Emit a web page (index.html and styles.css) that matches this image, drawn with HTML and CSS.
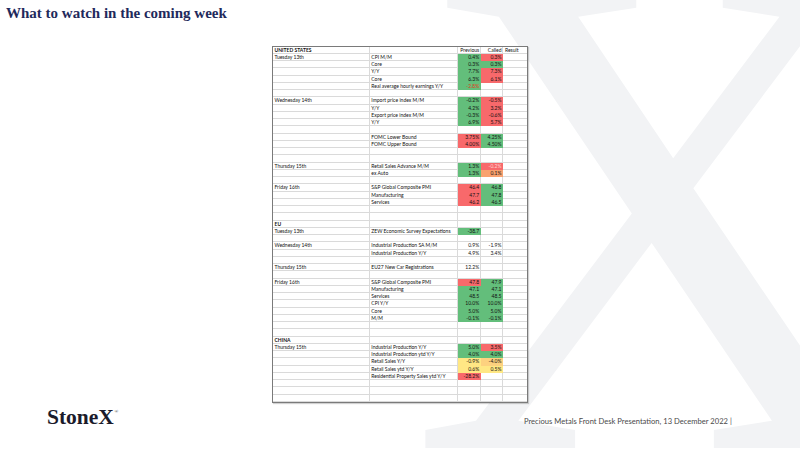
FILE: index.html
```html
<!DOCTYPE html>
<html lang="en">
<head>
<meta charset="utf-8">
<title>What to watch in the coming week</title>
<link rel="stylesheet" href="styles.css">
</head>
<body>
<div class="watermark" aria-hidden="true"></div>
<div class="slide">
  <header class="head"><h1 class="title">What to watch in the coming week</h1></header>
  <main class="content">
    <div class="sheet">
      <div class="row"><div class="c b">UNITED STATES</div><div class="c"></div><div class="c n">Previous</div><div class="c n">Called</div><div class="c e">Result</div></div>
      <div class="row"><div class="c">Tuesday 13th</div><div class="c">CPI M/M</div><div class="c n g">0.4%</div><div class="c n r">0.3%</div><div class="c e"></div></div>
      <div class="row"><div class="c"></div><div class="c">Core</div><div class="c n g">0.3%</div><div class="c n g">0.3%</div><div class="c e"></div></div>
      <div class="row"><div class="c"></div><div class="c">Y/Y</div><div class="c n g">7.7%</div><div class="c n r">7.3%</div><div class="c e"></div></div>
      <div class="row"><div class="c"></div><div class="c">Core</div><div class="c n g">6.3%</div><div class="c n r">6.1%</div><div class="c e"></div></div>
      <div class="row"><div class="c"></div><div class="c">Real average hourly earnings Y/Y</div><div class="c n g neg">-2.8%</div><div class="c n"></div><div class="c e"></div></div>
      <div class="row"><div class="c"></div><div class="c"></div><div class="c"></div><div class="c"></div><div class="c e"></div></div>
      <div class="row"><div class="c">Wednesday 14th</div><div class="c">Import price index M/M</div><div class="c n g">-0.2%</div><div class="c n r">-0.5%</div><div class="c e"></div></div>
      <div class="row"><div class="c"></div><div class="c">Y/Y</div><div class="c n g">4.2%</div><div class="c n r">3.2%</div><div class="c e"></div></div>
      <div class="row"><div class="c"></div><div class="c">Export price index M/M</div><div class="c n g">-0.3%</div><div class="c n r">-0.6%</div><div class="c e"></div></div>
      <div class="row"><div class="c"></div><div class="c">Y/Y</div><div class="c n g">6.9%</div><div class="c n r">5.7%</div><div class="c e"></div></div>
      <div class="row"><div class="c"></div><div class="c"></div><div class="c"></div><div class="c"></div><div class="c e"></div></div>
      <div class="row"><div class="c"></div><div class="c">FOMC Lower Bound</div><div class="c n r">3.75%</div><div class="c n g">4.25%</div><div class="c e"></div></div>
      <div class="row"><div class="c"></div><div class="c">FOMC Upper Bound</div><div class="c n r">4.00%</div><div class="c n g">4.50%</div><div class="c e"></div></div>
      <div class="row"><div class="c"></div><div class="c"></div><div class="c"></div><div class="c"></div><div class="c e"></div></div>
      <div class="row"><div class="c"></div><div class="c"></div><div class="c"></div><div class="c"></div><div class="c e"></div></div>
      <div class="row"><div class="c">Thursday 15th</div><div class="c">Retail Sales Advance M/M</div><div class="c n g">1.3%</div><div class="c n r pale">-0.2%</div><div class="c e"></div></div>
      <div class="row"><div class="c"></div><div class="c">ex Auto</div><div class="c n g">1.3%</div><div class="c n o">0.1%</div><div class="c e"></div></div>
      <div class="row"><div class="c"></div><div class="c"></div><div class="c"></div><div class="c"></div><div class="c e"></div></div>
      <div class="row"><div class="c">Friday 16th</div><div class="c">S&amp;P Global Composite PMI</div><div class="c n r">46.4</div><div class="c n g">46.8</div><div class="c e"></div></div>
      <div class="row"><div class="c"></div><div class="c">Manufacturing</div><div class="c n r">47.7</div><div class="c n g">47.8</div><div class="c e"></div></div>
      <div class="row"><div class="c"></div><div class="c">Services</div><div class="c n r">46.2</div><div class="c n g">46.5</div><div class="c e"></div></div>
      <div class="row"><div class="c"></div><div class="c"></div><div class="c"></div><div class="c"></div><div class="c e"></div></div>
      <div class="row"><div class="c"></div><div class="c"></div><div class="c"></div><div class="c"></div><div class="c e"></div></div>
      <div class="row"><div class="c b">EU</div><div class="c"></div><div class="c"></div><div class="c"></div><div class="c e"></div></div>
      <div class="row"><div class="c">Tuesday 13th</div><div class="c">ZEW Economic Survey Expectations</div><div class="c n g">-38.7</div><div class="c n"></div><div class="c e"></div></div>
      <div class="row"><div class="c"></div><div class="c"></div><div class="c"></div><div class="c"></div><div class="c e"></div></div>
      <div class="row"><div class="c">Wednesday 14th</div><div class="c">Industrial Production SA M/M</div><div class="c n">0.9%</div><div class="c n">-1.9%</div><div class="c e"></div></div>
      <div class="row"><div class="c"></div><div class="c">Industrial Production Y/Y</div><div class="c n">4.9%</div><div class="c n">3.4%</div><div class="c e"></div></div>
      <div class="row"><div class="c"></div><div class="c"></div><div class="c"></div><div class="c"></div><div class="c e"></div></div>
      <div class="row"><div class="c">Thursday 15th</div><div class="c">EU27 New Car Registrations</div><div class="c n">12.2%</div><div class="c n"></div><div class="c e"></div></div>
      <div class="row"><div class="c"></div><div class="c"></div><div class="c"></div><div class="c"></div><div class="c e"></div></div>
      <div class="row"><div class="c">Friday 16th</div><div class="c">S&amp;P Global Composite PMI</div><div class="c n r">47.8</div><div class="c n g">47.9</div><div class="c e"></div></div>
      <div class="row"><div class="c"></div><div class="c">Manufacturing</div><div class="c n g">47.1</div><div class="c n g">47.1</div><div class="c e"></div></div>
      <div class="row"><div class="c"></div><div class="c">Services</div><div class="c n g">48.5</div><div class="c n g">48.5</div><div class="c e"></div></div>
      <div class="row"><div class="c"></div><div class="c">CPI Y/Y</div><div class="c n g">10.0%</div><div class="c n g">10.0%</div><div class="c e"></div></div>
      <div class="row"><div class="c"></div><div class="c">Core</div><div class="c n g">5.0%</div><div class="c n g">5.0%</div><div class="c e"></div></div>
      <div class="row"><div class="c"></div><div class="c">M/M</div><div class="c n g">-0.1%</div><div class="c n g">-0.1%</div><div class="c e"></div></div>
      <div class="row"><div class="c"></div><div class="c"></div><div class="c"></div><div class="c"></div><div class="c e"></div></div>
      <div class="row"><div class="c"></div><div class="c"></div><div class="c"></div><div class="c"></div><div class="c e"></div></div>
      <div class="row"><div class="c b">CHINA</div><div class="c"></div><div class="c"></div><div class="c"></div><div class="c e"></div></div>
      <div class="row"><div class="c">Thursday 15th</div><div class="c">Industrial Production Y/Y</div><div class="c n g">5.0%</div><div class="c n r">3.5%</div><div class="c e"></div></div>
      <div class="row"><div class="c"></div><div class="c">Industrial Production ytd Y/Y</div><div class="c n g">4.0%</div><div class="c n g">4.0%</div><div class="c e"></div></div>
      <div class="row"><div class="c"></div><div class="c">Retail Sales Y/Y</div><div class="c n y">-0.9%</div><div class="c n lo">-4.0%</div><div class="c e"></div></div>
      <div class="row"><div class="c"></div><div class="c">Retail Sales ytd Y/Y</div><div class="c n y">0.6%</div><div class="c n y">0.5%</div><div class="c e"></div></div>
      <div class="row"><div class="c"></div><div class="c">Residential Property Sales ytd Y/Y</div><div class="c n r">-28.2%</div><div class="c n"></div><div class="c e"></div></div>
      <div class="row"><div class="c"></div><div class="c"></div><div class="c"></div><div class="c"></div><div class="c e"></div></div>
      <div class="row"><div class="c"></div><div class="c"></div><div class="c"></div><div class="c"></div><div class="c e"></div></div>
      <div class="row"><div class="c"></div><div class="c"></div><div class="c"></div><div class="c"></div><div class="c e"></div></div>
    </div>
  </main>
  <footer class="foot">
    <div class="logo">StoneX<span class="reg">®</span></div>
    <div class="foot-text">Precious Metals Front Desk Presentation, 13 December 2022 |</div>
  </footer>
</div>
</body>
</html>
```
FILE: styles.css
```css
html, body {
  margin: 0;
  padding: 0;
  overflow: hidden;
}
body {
  width: 800px;
  height: 450px;
  position: relative;
  background: #ffffff;
}
.watermark {
  position: absolute;
  left: 0;
  top: 0;
  width: 800px;
  height: 450px;
  overflow: hidden;
  z-index: 0;
}
.watermark::before {
  content: "X";
  position: absolute;
  left: 410px;
  top: -138px;
  font-family: "Liberation Serif", serif;
  font-size: 700px;
  line-height: 1;
  color: #f2f3f5;
}
.slide {
  position: relative;
  z-index: 1;
  height: 450px;
  display: flex;
  flex-direction: column;
}
.head {
  height: 45.5px;
  box-sizing: border-box;
  padding: 6px 0 0 6px;
}
.title {
  margin: 0;
  font-family: "Liberation Serif", serif;
  font-weight: bold;
  font-size: 15px;
  line-height: 15px;
  color: #1f2a5c;
}
.content {
  display: flex;
  padding-left: 272px;
}
.sheet {
  display: flex;
  flex-direction: column;
  border: 1px solid #7a7a7a;
  background: #ffffff;
  box-shadow: 1px 1px 1px rgba(0, 0, 0, 0.18);
  font-family: Lato, "Liberation Sans", sans-serif;
  font-size: 5px;
  color: #111;
}
.row {
  display: grid;
  grid-template-columns: 96.8px 88.7px 22.7px 22.3px 23.5px;
  height: 7.26px;
}
.c {
  box-sizing: border-box;
  height: 7.26px;
  border-right: 1px solid #dadada;
  border-bottom: 1px solid #dadada;
  padding: 0 1px 0 1.5px;
  line-height: 6.4px;
  white-space: nowrap;
  overflow: hidden;
}
.c.e {
  border-right: none;
}
.n {
  text-align: right;
  padding: 0 1px 0 0;
}
.b {
  font-weight: bold;
}
.g { background: #63be7b; border-color: #63be7b; }
.r { background: #f8696b; border-color: #f8696b; }
.o { background: #f9a26f; border-color: #f9a26f; }
.y { background: #ffe784; border-color: #ffe784; }
.lo { background: #fdd17f; border-color: #fdd17f; }
.neg { color: #e03a1e; }
.pale { color: #ffd6d6; }
.foot {
  display: grid;
  grid-template-columns: 477px auto;
  align-items: baseline;
  padding: 4.5px 0 0 47px;
}
.logo {
  font-family: "Liberation Serif", serif;
  font-weight: bold;
  font-size: 21.5px;
  line-height: 21px;
  color: #1b1b2b;
}
.reg {
  font-size: 5px;
  line-height: 0;
  vertical-align: 11px;
  font-weight: normal;
  margin-left: 0.5px;
}
.foot-text {
  font-family: Lato, "Liberation Sans", sans-serif;
  font-size: 7.6px;
  color: #4a4a4a;
  white-space: nowrap;
}
```
